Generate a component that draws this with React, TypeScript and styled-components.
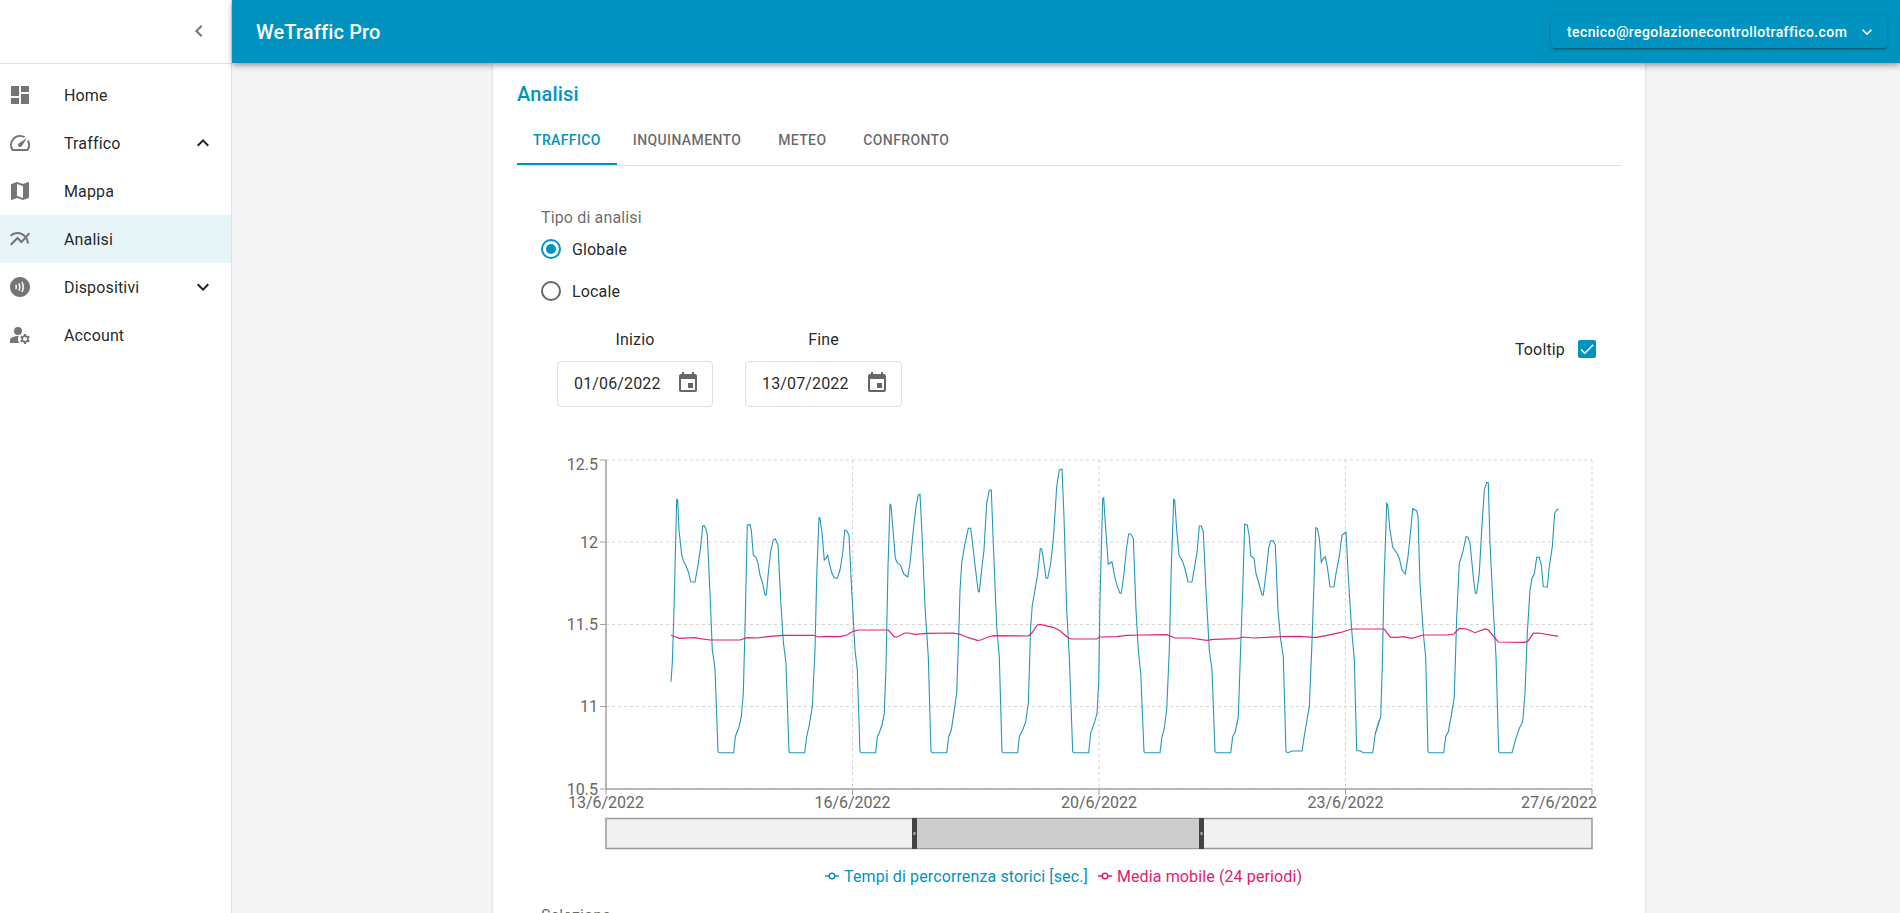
import React from 'react';
import styled, { createGlobalStyle } from 'styled-components';
import {
  MdChevronLeft,
  MdContactless,
  MdDashboard,
  MdEvent,
  MdExpandLess,
  MdExpandMore,
  MdManageAccounts,
  MdMap,
  MdOutlineSpeed,
  MdCheck,
  MdMultilineChart,
} from 'react-icons/md';

const BLUE = '#0093bf';
const PINK = '#e6196e';

const GlobalStyle = createGlobalStyle`
  html, body { margin: 0; padding: 0; height: 100%; overflow: hidden; }
  body {
    background: #f5f5f5;
    font-family: Roboto, "Liberation Sans", sans-serif;
    color: rgba(0,0,0,.87);
    letter-spacing: .15px;
  }
  * { box-sizing: border-box; }
`;

const Shell = styled.div`
  display: flex;
  height: 913px;
  overflow: hidden;
`;

const Sidebar = styled.aside`
  flex: 0 0 232px;
  background: #fff;
  border-right: 1px solid #e0e0e0;
`;

const SideTop = styled.div`
  height: 64px;
  border-bottom: 1px solid #e0e0e0;
  display: flex;
  align-items: center;
  justify-content: flex-end;
  padding: 0 20px 2px 0;
  color: #757575;
  font-size: 24px;
`;

const NavList = styled.nav`
  padding-top: 7px;
`;

const NavItem = styled.div<{ $active?: boolean }>`
  height: 48px;
  display: flex;
  align-items: center;
  padding: 0 16px 0 8px;
  font-size: 16px;
  background: ${p => (p.$active ? '#e7f5f9' : 'transparent')};
`;

const NavIcon = styled.span`
  width: 56px;
  display: flex;
  color: #757575;
  font-size: 24px;
`;

const NavLabel = styled.span`
  flex: 1;
`;

const NavArrow = styled.span`
  display: flex;
  font-size: 24px;
  color: rgba(0,0,0,.87);
`;

const Main = styled.div`
  flex: 1;
  min-width: 0;
  display: flex;
  flex-direction: column;
`;

const TopBar = styled.header`
  position: relative;
  z-index: 2;
  flex: 0 0 63px;
  background: ${BLUE};
  color: #fff;
  display: flex;
  align-items: center;
  justify-content: space-between;
  padding: 0 13px 0 24px;
  box-shadow: 0 2px 4px -1px rgba(0,0,0,.2), 0 4px 5px 0 rgba(0,0,0,.14), 0 1px 10px 0 rgba(0,0,0,.12);
`;

const Brand = styled.div`
  font-size: 20px;
  font-weight: 500;
`;

const UserButton = styled.div`
  width: 336px;
  height: 32px;
  display: flex;
  align-items: center;
  justify-content: space-between;
  padding: 0 10px 0 16px;
  font-size: 14px;
  font-weight: 500;
  letter-spacing: .4px;
  border-radius: 4px;
  box-shadow: 0 3px 1px -2px rgba(0,0,0,.2), 0 2px 2px 0 rgba(0,0,0,.14), 0 1px 5px 0 rgba(0,0,0,.12);
  svg { font-size: 20px; }
`;

const Scroll = styled.main`
  flex: 1;
  min-height: 0;
  overflow: hidden;
  padding-left: 261px;
`;

const Card = styled.section`
  width: 1152px;
  min-height: 900px;
  background: #fff;
  padding: 19px 24px 0;
  box-shadow: 0 2px 1px -1px rgba(0,0,0,.2), 0 1px 1px 0 rgba(0,0,0,.14), 0 1px 3px 0 rgba(0,0,0,.12);
`;

const Title = styled.h2`
  margin: 0;
  font-size: 20px;
  line-height: 24px;
  font-weight: 500;
  color: ${BLUE};
`;

const Tabs = styled.div`
  display: flex;
  margin-top: 11px;
  border-bottom: 1px solid #e0e0e0;
`;

const Tab = styled.div<{ $active?: boolean }>`
  height: 48px;
  min-width: 90px;
  padding: 0 16px 2px;
  display: flex;
  align-items: center;
  justify-content: center;
  font-size: 14px;
  font-weight: 500;
  letter-spacing: .38px;
  text-transform: uppercase;
  color: ${p => (p.$active ? BLUE : 'rgba(0,0,0,.6)')};
  box-shadow: ${p => (p.$active ? `inset 0 -2px 0 ${BLUE}` : 'none')};
`;

const Form = styled.div`
  padding: 40px 0 0 24px;
`;

const FieldLabel = styled.div`
  font-size: 16px;
  line-height: 24px;
  color: rgba(0,0,0,.6);
`;

const RadioGroup = styled.div`
  margin-top: -2px;
`;

const RadioRow = styled.label`
  display: flex;
  align-items: center;
  gap: 11px;
  height: 42px;
  font-size: 16px;
`;

const RadioMark = styled.span<{ $checked?: boolean }>`
  width: 20px;
  height: 20px;
  border-radius: 50%;
  border: 2px solid ${p => (p.$checked ? BLUE : '#666')};
  display: flex;
  align-items: center;
  justify-content: center;
  &::after {
    content: '';
    width: 10px;
    height: 10px;
    border-radius: 50%;
    background: ${p => (p.$checked ? BLUE : 'transparent')};
  }
`;

const DateRow = styled.div`
  display: flex;
  justify-content: space-between;
  padding: 16px 25px 0 16px;
`;

const DateGroup = styled.div`
  display: flex;
  gap: 32px;
`;

const DateField = styled.div`
  display: flex;
  flex-direction: column;
  align-items: center;
  font-size: 16px;
`;

const DateCaption = styled.div`
  line-height: 24px;
  margin-bottom: 9px;
`;

const DateBox = styled.div<{ $wide?: boolean }>`
  width: ${p => (p.$wide ? 157 : 156)}px;
  height: 46px;
  display: flex;
  align-items: center;
  justify-content: space-between;
  padding: 0 12px 2px 16px;
  border: 1px solid #e0e0e0;
  border-radius: 4px;
  svg { font-size: 24px; color: #666; }
`;

const TooltipToggle = styled.div`
  display: flex;
  align-items: center;
  gap: 13px;
  height: 24px;
  margin-top: 9px;
  font-size: 16px;
`;

const CheckBox = styled.span`
  width: 18px;
  height: 18px;
  border-radius: 2px;
  background: ${BLUE};
  color: #fff;
  display: flex;
  align-items: center;
  justify-content: center;
  font-size: 18px;
`;

const ChartBox = styled.div`
  margin: 43px 0 0 19px;
  svg { display: block; }
  text {
    font-family: Roboto, "Liberation Sans", sans-serif;
    font-size: 16px;
    letter-spacing: 0;
    fill: #666;
  }
`;

const Legend = styled.div`
  display: flex;
  justify-content: flex-start;
  align-items: center;
  height: 24px;
  margin: 4px 0 0 284px;
  font-size: 16px;
  letter-spacing: .12px;
`;

const LegendEntry = styled.span<{ $color: string }>`
  display: flex;
  align-items: center;
  gap: 3px;
  margin-right: 10px;
  color: ${p => p.$color};
`;

const SelectionLabel = styled(FieldLabel)`
  margin-top: 16px;
`;

// points read off the chart, x is relative to offset and scaled by 3
const blueA = [393,695,397,640,402,480,410,148,413,150,417,240,425,315,430,332,437,345,445,365,452,395,465,396,475,340,482,290,488,228,492,227,497,235,502,255,510,430,517,600,525,655,534,905,538,908,581,908,586,860,590,848,596,835,604,800,610,730,616,500,622,225,630,224,634,240,640,315,648,322,654,340,660,375,668,400,675,435,679,435,685,370,692,305,700,270,706,266,714,285,722,450,730,575,738,640,747,905,750,908,794,908,800,860,808,825,817,770,825,600,830,380,837,203,840,205,846,250,853,330,858,325,863,316,868,340,876,370,883,383,892,385,900,360,908,310,914,241,920,243,927,255,935,420,945,600,952,660,960,905,965,908,1007,908,1012,860,1018,848,1026,825,1033,790,1038,650,1044,350,1050,163,1053,165,1060,250,1066,325,1072,338,1082,347,1092,373,1103,381,1110,340,1120,240,1128,170,1135,135,1140,133,1146,250,1155,470,1165,620,1173,905,1178,908,1220,908,1226,860,1234,840,1240,800,1250,730,1258,500];
const blueB = [0,420,5,340,14,285,25,235,32,235,40,300,48,370,55,425,58,425,66,350,72,300,80,160,88,120,94,120,100,280,110,530,118,620,126,905,130,908,173,908,178,860,188,840,197,815,205,760,212,530,217,465,225,420,233,370,241,296,245,296,252,340,258,385,263,385,272,340,280,270,290,110,298,60,306,58,312,200,320,480,328,620,338,905,342,908,386,908,392,850,404,815,411,790,416,700,420,450,428,145,431,143,436,220,445,343,456,335,464,380,472,410,480,430,484,430,492,370,500,290,506,252,512,252,520,265,528,480,535,600,542,670,552,905,556,908,600,908,606,860,612,840,620,780,628,600,634,350,641,148,644,150,650,240,657,315,668,335,676,360,684,395,696,396,704,350,712,300,718,228,724,228,730,245,738,420,748,600,756,660,765,905,770,908,812,908,818,860,826,845,835,800,840,650,848,420,854,223,862,225,868,260,872,317,882,325,888,370,898,405,906,435,910,435,918,370,926,295,932,272,940,272,946,285,954,480,962,570,970,620,978,905,984,908,996,903,1026,903,1034,850,1048,770,1055,600,1062,400,1067,233,1072,235,1078,265,1084,337,1090,325,1096,320,1102,350,1110,410,1122,411,1128,370,1138,320,1146,255,1158,246,1165,380,1175,540,1183,630,1190,902,1200,902,1210,908,1238,908,1246,850,1258,810];
const blueC = [525,855,542,800,547,650,552,400,560,160,563,165,570,240,578,292,590,308,598,325,606,360,616,372,624,320,632,240,638,176,650,182,654,200,660,400,670,550,677,620,684,905,688,908,731,908,737,860,745,845,755,790,763,740,770,500,778,340,788,308,798,260,804,262,810,280,820,380,826,430,830,430,838,370,845,240,853,120,860,97,865,98,870,280,880,480,888,620,896,905,900,908,936,908,945,875,958,835,968,815,975,730,982,550,990,420,996,385,1003,372,1010,322,1018,322,1024,345,1030,410,1042,411,1048,350,1057,290,1064,190,1070,180,1076,177];

const pinkA = [393,556,405,560,418,565,465,563,480,566,510,570,600,570,622,563,650,564,690,559,730,556,820,556,836,561,855,559,900,560,920,555,940,544,955,540,1045,540,1052,548,1062,560,1072,561,1095,549,1105,549,1125,553,1160,550,1240,549,1260,553];
const pinkB = [25,563,52,571,62,570,85,561,100,557,205,558,215,550,232,525,240,523,280,532,300,542,325,564,335,567,410,567,420,561,470,560,500,556,540,555,620,554,645,564,690,564,740,571,760,568,830,566,850,561,880,564,960,560,1020,559,1060,562,1070,562,1100,556,1140,548,1175,537,1260,537];
const pinkC = [553,537,560,548,572,562,590,562,610,560,635,565,670,555,740,555,762,552,778,535,800,537,825,548,855,537,865,540,895,576,975,577,985,572,1000,550,1015,549,1075,559];

const toPoints = (data: number[], offset: number) => {
  const out: string[] = [];
  for (let i = 0; i < data.length; i += 2) {
    out.push(`${(offset + data[i] / 3).toFixed(1)},${(450 + data[i + 1] / 3).toFixed(1)}`);
  }
  return out.join(' ');
};

const bluePoints = [toPoints(blueA, 540), toPoints(blueB, 960), toPoints(blueC, 1200)].join(' ');
const pinkPoints = [toPoints(pinkA, 540), toPoints(pinkB, 960), toPoints(pinkC, 1200)].join(' ');

const yTicks = [
  { label: '12.5', y: 460, base: 470 },
  { label: '12', y: 542, base: 548 },
  { label: '11.5', y: 624.5, base: 630 },
  { label: '11', y: 706.5, base: 712 },
  { label: '10.5', y: 789, base: 795 },
];

const xTicks = [
  { label: '13/6/2022', x: 606, at: 606 },
  { label: '16/6/2022', x: 852.5, at: 852.5 },
  { label: '20/6/2022', x: 1099, at: 1099 },
  { label: '23/6/2022', x: 1345.5, at: 1345.5 },
  { label: '27/6/2022', x: 1592, at: 1559 },
];

const Handle: React.FC<{ x: number }> = ({ x }) => (
  <g>
    <rect x={x} y={818} width={5} height={31} fill="#444" />
    <rect x={x + 1.5} y={832} width={2} height={3} fill="#aaa" />
  </g>
);

const Chart = () => (
  <svg width={1060} height={410} viewBox="560 450 1060 410">
    {yTicks.map(t => (
      <line key={t.label} x1={606} x2={1592} y1={t.y} y2={t.y} stroke="#d4d4d4" strokeDasharray="3 3" />
    ))}
    {xTicks.map(t => (
      <line key={t.label} x1={t.x} x2={t.x} y1={460} y2={789} stroke="#d4d4d4" strokeDasharray="3 3" />
    ))}
    <polyline points={bluePoints} fill="none" stroke="#2497b8" strokeWidth={1.1} />
    <polyline points={pinkPoints} fill="none" stroke="#dd2277" strokeWidth={1.2} />
    <line x1={606} x2={606} y1={460} y2={789} stroke="#a0a0a0" strokeWidth={1.4} />
    <line x1={606} x2={1592} y1={789} y2={789} stroke="#a0a0a0" strokeWidth={1.4} />
    {yTicks.map(t => (
      <g key={t.label}>
        <line x1={600} x2={606} y1={t.y} y2={t.y} stroke="#a0a0a0" />
        <text x={598} y={t.base} textAnchor="end">{t.label}</text>
      </g>
    ))}
    {xTicks.map(t => (
      <g key={t.label}>
        <line x1={t.x} x2={t.x} y1={789} y2={795} stroke="#a0a0a0" />
        <text x={t.at} y={808} textAnchor="middle">{t.label}</text>
      </g>
    ))}
    <rect x={606} y={818.5} width={986} height={30} fill="#f1f1f1" stroke="#999" strokeWidth={1.5} />
    <rect x={915} y={819} width={286} height={29} fill="#cccccc" />
    <Handle x={912} />
    <Handle x={1199} />
  </svg>
);

const LegendMark: React.FC<{ color: string }> = ({ color }) => (
  <svg width={16} height={8} viewBox="0 0 16 8">
    <line x1={0} x2={14} y1={4} y2={4} stroke={color} strokeWidth={1.5} />
    <circle cx={7} cy={4} r={2.8} fill="#fff" stroke={color} strokeWidth={1.5} />
  </svg>
);

const navItems = [
  { label: 'Home', icon: <MdDashboard /> },
  { label: 'Traffico', icon: <MdOutlineSpeed />, arrow: <MdExpandLess /> },
  { label: 'Mappa', icon: <MdMap /> },
  { label: 'Analisi', icon: <MdMultilineChart />, active: true },
  { label: 'Dispositivi', icon: <MdContactless />, arrow: <MdExpandMore /> },
  { label: 'Account', icon: <MdManageAccounts /> },
];

const tabs = ['Traffico', 'Inquinamento', 'Meteo', 'Confronto'];

const App: React.FC = () => (
  <Shell>
    <GlobalStyle />
    <Sidebar>
      <SideTop>
        <MdChevronLeft />
      </SideTop>
      <NavList>
        {navItems.map(item => (
          <NavItem key={item.label} $active={item.active}>
            <NavIcon>{item.icon}</NavIcon>
            <NavLabel>{item.label}</NavLabel>
            {item.arrow && <NavArrow>{item.arrow}</NavArrow>}
          </NavItem>
        ))}
      </NavList>
    </Sidebar>
    <Main>
      <TopBar>
        <Brand>WeTraffic Pro</Brand>
        <UserButton>
          tecnico@regolazionecontrollotraffico.com
          <MdExpandMore />
        </UserButton>
      </TopBar>
      <Scroll>
        <Card>
          <Title>Analisi</Title>
          <Tabs>
            {tabs.map((t, i) => (
              <Tab key={t} $active={i === 0}>{t}</Tab>
            ))}
          </Tabs>
          <Form>
            <FieldLabel>Tipo di analisi</FieldLabel>
            <RadioGroup>
              <RadioRow><RadioMark $checked />Globale</RadioRow>
              <RadioRow><RadioMark />Locale</RadioRow>
            </RadioGroup>
            <DateRow>
              <DateGroup>
                <DateField>
                  <DateCaption>Inizio</DateCaption>
                  <DateBox>01/06/2022<MdEvent /></DateBox>
                </DateField>
                <DateField>
                  <DateCaption>Fine</DateCaption>
                  <DateBox $wide>13/07/2022<MdEvent /></DateBox>
                </DateField>
              </DateGroup>
              <TooltipToggle>
                Tooltip
                <CheckBox><MdCheck /></CheckBox>
              </TooltipToggle>
            </DateRow>
            <ChartBox>
              <Chart />
            </ChartBox>
            <Legend>
              <LegendEntry $color={BLUE}>
                <LegendMark color={BLUE} />
                Tempi di percorrenza storici [sec.]
              </LegendEntry>
              <LegendEntry $color={PINK}>
                <LegendMark color={PINK} />
                Media mobile (24 periodi)
              </LegendEntry>
            </Legend>
            <SelectionLabel>Selezione</SelectionLabel>
          </Form>
        </Card>
      </Scroll>
    </Main>
  </Shell>
);

export default App;
